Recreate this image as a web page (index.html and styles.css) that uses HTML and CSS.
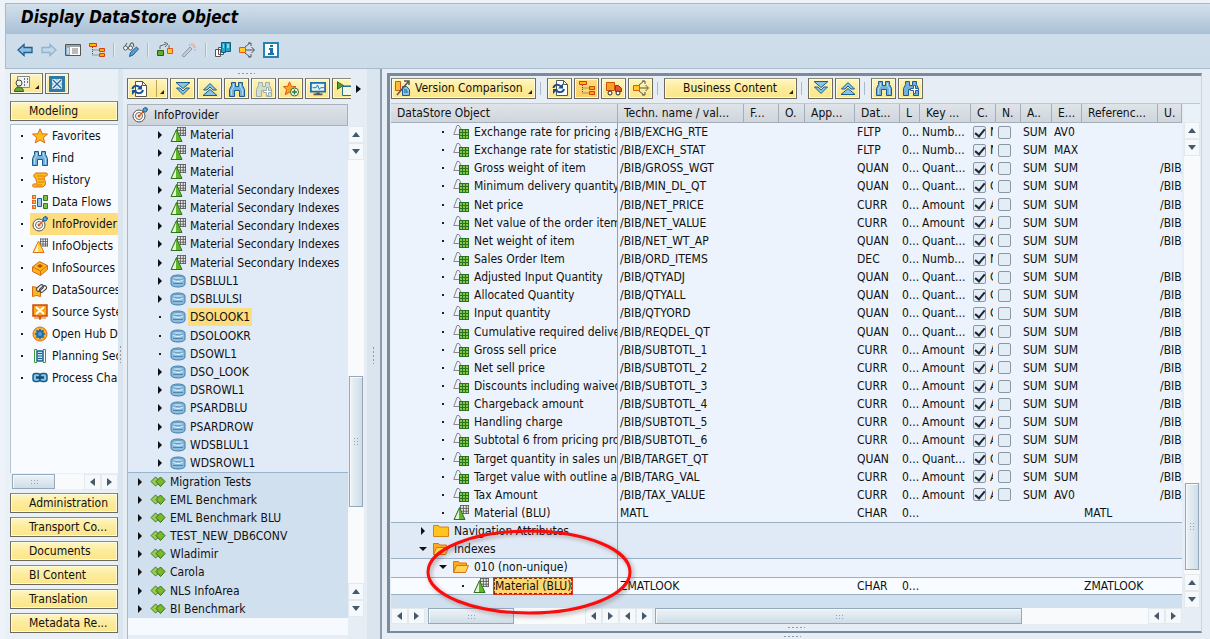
FILE: index.html
```
<!DOCTYPE html>
<html lang="en">
<head>
<meta charset="utf-8">
<title>Display DataStore Object</title>
<link rel="stylesheet" href="styles.css">
</head>
<body>
<svg class="sprite" aria-hidden="true">
  <symbol id="back" viewBox="0 0 16 16"><path d="M1 8l6-5.500v3h8v5H7v3z" fill="#8fc0e2" stroke="#1d5f93" stroke-width="1.300"/></symbol>
  <symbol id="fwd" viewBox="0 0 16 16"><path d="M15 8L9 2.500v3H1v5h8v3z" fill="#c3d9e9" stroke="#8fb4cf" stroke-width="1.300"/></symbol>
  <symbol id="layout" viewBox="0 0 16 16"><path d="M.5 2.500h15v11H.5z" fill="#fff" stroke="#555"/><path d="M1 5h4v8H1z" fill="#8eb4cc"/><path d="M1 3h14v2H1z" fill="#99a5ad"/><path d="M2 7h2M2 9h2M2 11h2" stroke="#fff"/><path d="M7 7h6M7 9h6M7 11h6" stroke="#777"/></symbol>
  <symbol id="hierarchy" viewBox="0 0 16 16"><path d="M3.500 5v8H10M3.500 8H10" fill="none" stroke="#555" stroke-dasharray="1 1"/><path d="M.5 1.500h7v3h-7z" fill="#fb0" stroke="#d2400f"/><path d="M10.500 6.500h5v3h-5zM10.500 11.500h5v3h-5z" fill="#fa0" stroke="#d2400f"/></symbol>
  <symbol id="glasses" viewBox="0 0 16 16"><path d="M1 6l3-5M6 5l2-4h2l1 4" fill="none" stroke="#555"/><circle cx="2.500" cy="6" r="2" fill="#fff" stroke="#555"/><circle cx="7.500" cy="6" r="2" fill="#fff" stroke="#555"/><path d="M6.500 14.500l1-4 6-5.500 2 2-5.500 6z" fill="#5aa0d0" stroke="#1d5f93"/></symbol>
  <symbol id="exchange" viewBox="0 0 16 16"><path d="M3 7V4l6-2M7 0l4 2-3 3M12 3v3" fill="none" stroke="#666"/><path d="M.5 8.500h6v5h-6z" fill="#5fae2e" stroke="#2c5c17"/><path d="M10.500 6.500h5v5h-5z" fill="#fc2" stroke="#e5541a"/></symbol>
  <symbol id="wand" viewBox="0 0 16 16"><path d="M1 13.500L9 5l2 2-8 8z" fill="#c5d0da" stroke="#8c98a3"/><path d="M11 1v3M15 5h-3M14 2l-2 2M8 2l1 2M15 9l-2-2" stroke="#ef9c77"/></symbol>
  <symbol id="copydocs" viewBox="0 0 16 16"><path d="M.5 7.500h5v7h-5zM3.500 5.500h5v7h-5z" fill="#fff" stroke="#555"/><path d="M6.500.5h4v10h-4zM10.500.5h5v9h-5z" fill="#23a6c8" stroke="#0b607c"/><path d="M12 3h2M12 5h2M8 3h1M8 5h1" stroke="#fff"/><path d="M5 8h2M5 10h2" stroke="#666"/></symbol>
  <symbol id="spread" viewBox="0 0 16 16"><path d="M6 5l5-4M9 1h3v3M6 11l5 4M9 15h3v-3M6 8h9M12.500 5l3 3-3 3" fill="none" stroke="#555"/><path d="M.5 5.500h6v5h-6z" fill="#fc2" stroke="#e5541a"/></symbol>
  <symbol id="info" viewBox="0 0 16 16"><path d="M1 1h14v14H1z" fill="#fff" stroke="#2683b4" stroke-width="2"/><path d="M7 3h3v2H7zM6 6h4v5h1v2H5v-2h2V8H6z" fill="#1b72a8"/></symbol>
  <symbol id="person" viewBox="0 0 16 16"><path d="M3.500.5h12v11h-12z" fill="#eef2f4" stroke="#888"/><path d="M10 3h1M13 3h1M10 6h1M13 6h1M10 9h1" stroke="#444" stroke-width="1.500"/><circle cx="5" cy="7" r="3" fill="#f6f6e8" stroke="#444"/><path d="M.5 15.500c0-6 9-6 9 0z" fill="#69a63a" stroke="#335f1a"/></symbol>
  <symbol id="close" viewBox="0 0 16 16"><path d="M1.500 1.500h13v13h-13z" fill="#9ccbe6" stroke="#2d7aa9" stroke-width="3"/><path d="M4 4l8 8M12 4l-8 8" stroke="#fff" stroke-width="3.500"/><path d="M4 4l8 8M12 4l-8 8" stroke="#2a6b9a" stroke-width="1.500"/></symbol>
  <symbol id="refresh" viewBox="0 0 16 16"><path d="M4.500.5h7l4 4v11h-11z" fill="#fff" stroke="#555"/><path d="M11.500.5v4h4" fill="none" stroke="#555"/><path d="M1.500 8C2 4 7 4 9.500 7M12 9c-1 4-6 4-8 1" fill="none" stroke="#1b4e8f" stroke-width="2"/><path d="M11 3.500v5H6zM1 14V9h5z" fill="#1b4e8f"/></symbol>
  <symbol id="down2" viewBox="0 0 16 16"><path d="M1 1.500h14l-7 6z" fill="#8cc3e4" stroke="#175f8f"/><path d="M1.500 7H5l3 3 3-3h3.500L8 13.500z" fill="#8cc3e4" stroke="#175f8f"/></symbol>
  <symbol id="up2" viewBox="0 0 16 16"><path d="M1 14.500h14l-7-6z" fill="#8cc3e4" stroke="#175f8f"/><path d="M1.500 9H5l3-3 3 3h3.500L8 2.500z" fill="#8cc3e4" stroke="#175f8f"/></symbol>
  <symbol id="find" viewBox="0 0 16 16"><path d="M2.500 1.500h4v4h3v-4h4v3l2 4v7h-5v-6h-5v6h-5v-7l2-4z" fill="#73b1db" stroke="#165c91"/><path d="M4.500 3v3l-2 3v5M11.500 3v3l2 3v5" fill="none" stroke="#b4daf2"/></symbol>
  <symbol id="findoff" viewBox="0 0 16 16"><path d="M2.500 1.500h4v4h3v-4h4v3l2 4v7h-5v-6h-5v6h-5v-7l2-4z" fill="#d3decb" stroke="#9aaeb0"/><path d="M10.500 6.500h2v3h3v2h-3v3h-2v-3h-3v-2h3z" fill="#fff" stroke="#9aaeb0"/></symbol>
  <symbol id="findnext" viewBox="0 0 16 16"><path d="M2.500 1.500h4v4h3v-4h4v3l2 4v7h-5v-6h-5v6h-5v-7l2-4z" fill="#73b1db" stroke="#165c91"/><path d="M10.500 5.500h2v3h3v2h-3v3h-2v-3h-3v-2h3z" fill="#fff" stroke="#2c5f9c"/></symbol>
  <symbol id="star" viewBox="0 0 16 16"><path d="M8 .8l2.100 5 5.400.3-4.200 3.500 1.500 5.300L8 12l-4.800 2.900 1.500-5.300L.5 6.100l5.400-.3z" fill="#fdbd1c" stroke="#dd6b12"/></symbol>
  <symbol id="staradd" viewBox="0 0 16 16"><path d="M6.500.8l1.800 4.500 4.700.3-3.600 3.200 1.300 5-4.200-2.600-4.300 2.600 1.400-5L.5 5.600l4.300-.3z" fill="#fba31c" stroke="#dd5b12"/><circle cx="11.500" cy="11" r="4" fill="#fff" stroke="#2e6b2e"/><path d="M11.500 8.500v5M9 11h5" stroke="#2e7a2e" stroke-width="1.500"/></symbol>
  <symbol id="monitor" viewBox="0 0 18 16"><path d="M1 1h16v10H1z" fill="#e2f2fa" stroke="#1d6fa5" stroke-width="2"/><path d="M3 6.500h4l1.500-3 2 5 1.500-2h4" fill="none" stroke="#1d6fa5"/><path d="M7 12h4v1h3v2H4v-2h3z" fill="#555"/></symbol>
  <symbol id="flag" viewBox="0 0 16 16"><path d="M1.500.5v8M7 5h9M6.500 13.500V5" fill="none" stroke="#555"/><path d="M1.500 1l6 3.500-6 3.500z" fill="#4fa52b" stroke="#2a6d17"/><path d="M6.500 5.500H18v9H6.500z" fill="#eef6e6" stroke="#2a6d8f"/></symbol>
  <symbol id="scroll" viewBox="0 0 16 16"><path d="M4 1h10c2 0 2 3 0 3h-1c-2 4 2 6 0 9-1 2-3 2-5 2H2c-2 0-2-3 0-3h2c2-2-1-4 0-6-3 0-3-4 0-5z" fill="#fdbd1c" stroke="#dd6b12"/><path d="M5 4h7M6 7h6M6 10h6M4 13h6" stroke="#e27a14"/></symbol>
  <symbol id="flows" viewBox="0 0 16 16"><path d="M0 1h4v4H0zM0 6h4v4H0zM0 11h4v4H0z" fill="#e46a1d"/><path d="M1.500 3h1.500M1.500 8h1.500M1.500 13h1.500" stroke="#ffe0a0" stroke-width="1.500"/><path d="M5.500 4.500h4v8h-4z" fill="#9cc9e6" stroke="#1d5f93"/><path d="M11.500 1.500h4v5h-4zM11.500 9.500h4v5h-4z" fill="#7fc04c" stroke="#2f7a24"/></symbol>
  <symbol id="target" viewBox="0 0 16 16"><circle cx="7" cy="9" r="6" fill="#fff" stroke="#555"/><circle cx="7" cy="9" r="3.500" fill="none" stroke="#666"/><circle cx="7" cy="9" r="1.500" fill="#df5d19"/><path d="M7 9l5-5" stroke="#df5d19" stroke-width="1.500"/><path d="M11 5V2l3-2v2h2l-2 3z" fill="#58a6d4" stroke="#17608f"/></symbol>
  <symbol id="grid" viewBox="0 0 8 8"><path d="M0 0h8v8H0z" fill="#f4f4f4"/><path d="M.5 0v8M3 0v8M5.500 0v8M7.500 0v8M0 .5h8M0 3h8M0 5.500h8M0 7.500h8" stroke="#555" stroke-width=".8"/></symbol>
  <symbol id="infoobj" viewBox="0 0 16 16"><use href="#grid" x="8" y="0" width="8" height="9"/><path d="M6.500 3L12 14.500H1z" fill="#ffd54a" stroke="#e5701c"/><path d="M6 6v8H2.500z" fill="#fff3c0"/></symbol>
  <symbol id="matl" viewBox="0 0 16 16"><use href="#grid" x="7" y="0" width="9" height="9"/><path d="M6.500 2.500L12 14.500H1z" fill="#5fb52d" stroke="#2f7518"/><path d="M6 5v9H2z" fill="#e6f4d8"/></symbol>
  <symbol id="source" viewBox="0 0 16 16"><path d="M.5 7l7-5.500 8 4v4l-7 6-8-4z" fill="#fdb51c" stroke="#d86a12"/><path d="M.5 7l8 4 7-5.500M8.500 11v4" fill="none" stroke="#d86a12"/><path d="M5 6l3-2 3 2-3 2z" fill="#b75010"/></symbol>
  <symbol id="dsource" viewBox="0 0 16 16"><path d="M.5 4.500l4 1h4v9l-4-1-4 1z" fill="#fdb51c" stroke="#d86a12"/><rect x="4" y="4" width="8" height="4" rx="2" fill="#eee" stroke="#444" transform="rotate(-40 8 6)"/><rect x="7" y="5" width="8" height="4" rx="2" fill="none" stroke="#444" transform="rotate(-40 11 7)"/></symbol>
  <symbol id="system" viewBox="0 0 16 16"><path d="M1 1h14v11H9l-1 3-1-3H1z" fill="#f9a61a" stroke="#c84d0e" stroke-width="1.500"/><path d="M4 3l8 7M12 3l-8 7" stroke="#fff" stroke-width="2"/><path d="M2 14h12" stroke="#d86a12"/></symbol>
  <symbol id="hub" viewBox="0 0 16 16"><circle cx="8" cy="8" r="7" fill="#fcb32b" stroke="#d86a12"/><path d="M8 2.500l1.500 2 2.500-.5-.5 2.500 2 1.500-2 1.500.5 2.500-2.500-.5-1.500 2-1.500-2-2.500.5.5-2.500-2-1.500 2-1.500L4 4l2.500.5z" fill="#1f6ca8"/><circle cx="8" cy="8" r="2" fill="#4aa0d8"/></symbol>
  <symbol id="plan" viewBox="0 0 16 16"><path d="M5 1.500H2.500v13H5M11 1.500h2.500v13H11" fill="none" stroke="#3f9a3c"/><path d="M5 3h6v10H5z" fill="#c3e0f0" stroke="#195f8f" stroke-width="1.500"/><path d="M6 5.500h4M6 8h4M6 10.500h4" stroke="#195f8f"/></symbol>
  <symbol id="chain" viewBox="0 0 16 16"><rect x="1" y="3.500" width="7" height="8" rx="2.500" fill="#8cc3e4" stroke="#175f8f" stroke-width="1.500"/><rect x="8" y="3.500" width="7" height="8" rx="2.500" fill="#8cc3e4" stroke="#175f8f" stroke-width="1.500"/><path d="M4 7.500h8" stroke="#0f4a72" stroke-width="2.500"/></symbol>
  <symbol id="cyl" viewBox="0 0 16 16"><path d="M1 5c0-4 14-4 14 0v6c0 4-14 4-14 0z" fill="#8cbbdd" stroke="#3f7dab"/><path d="M3 7c2 2 8 2 10 0" fill="none" stroke="#eaf5fc"/><ellipse cx="8" cy="5" rx="5.500" ry="1.500" fill="#b9daef" stroke="#3f80ab" stroke-width=".6"/><path d="M3 10.500h10" stroke="#4a86b0"/></symbol>
  <symbol id="area" viewBox="0 0 16 16"><path d="M5.500 3L1 7.500 5.500 12l5-4.500z" fill="#9ccb54" stroke="#3d7c20"/><path d="M10.500 3L6 7.500l4.500 5 4.500-5z" fill="#7bb928" stroke="#2d6c1a"/></symbol>
  <symbol id="keyfig" viewBox="0 0 16 16"><path d="M6 10.500H.8L4 1.500h2L8 5" fill="none" stroke="#888"/><path d="M6 5h10v10H6z" fill="#8dc63f"/><path d="M6.500 5v10M9.500 5v10M12.500 5v10M15.500 5v10M6 5.500h10M6 8.500h10M6 11.500h10M6 14.500h10" stroke="#267326"/></symbol>
  <symbol id="folder" viewBox="0 0 16 16"><path d="M.5 13.500v-11h5l1 1.500h9v9.500z" fill="#ffc51c" stroke="#d88412"/></symbol>
  <symbol id="folderopen" viewBox="0 0 16 16"><path d="M.5 13.500v-11h5l1 1.500h7v3" fill="#ffab1c" stroke="#d87412"/><path d="M.5 13.500l3-7h12l-3 7z" fill="#ffd555" stroke="#d87412"/></symbol>
  <symbol id="truck" viewBox="0 0 16 16"><path d="M.5 2.500h8v8h-8z" fill="#f9a21b" stroke="#cf4f10"/><path d="M9.500 5.500h3l3 3v3h-6z" fill="#e3552a" stroke="#a12c10"/><circle cx="4" cy="13" r="2" fill="#fff" stroke="#222"/><circle cx="12" cy="13" r="2" fill="#fff" stroke="#222"/></symbol>
  <symbol id="version" viewBox="0 0 16 16"><path d="M.5 1.500h5v9h-5z" fill="#fcbc35" stroke="#d25a12"/><path d="M7.500 6.500h4l3 3v6h-7z" fill="#8cc3e4" stroke="#175f8f"/><path d="M9 10h3M9 12h4" stroke="#175f8f"/><path d="M9 1h5v4M2 15L13 2" fill="none" stroke="#555" stroke-width="1.500"/></symbol>
</svg>
<div class="app">
  <header class="titlebar"><h1>Display DataStore Object</h1></header>
  <nav class="toolbar" aria-label="Application toolbar" id="apptools"></nav>
  <main class="work">
    <aside class="side">
      <div class="row buttons">
        <button class="btn menu" aria-label="Role"><svg><use href="#person"/></svg><i class="corner"></i></button>
        <button class="btn" aria-label="Close"><svg><use href="#close"/></svg></button>
      </div>
      <button class="btn wide first">Modeling</button>
      <ul class="nav" id="navlist"></ul>
      <div class="hbar side-bar"><i class="thumb h"></i><span class="track"></span><button class="ar left" aria-label="Scroll left"></button><button class="ar right" aria-label="Scroll right"></button></div>
      <div class="stack">
        <button class="btn wide">Administration</button>
        <button class="btn wide">Transport Co...</button>
        <button class="btn wide">Documents</button>
        <button class="btn wide">BI Content</button>
        <button class="btn wide">Translation</button>
        <button class="btn wide">Metadata Re...</button>
      </div>
    </aside>
    <div class="split"><i class="grip v"></i></div>
    <section class="middle">
      <div class="griprow"><i class="grip"></i></div>
      <div class="row midtools" id="midtools"></div>
      <div class="treebox">
        <div class="treecol">
          <div class="treehead"><svg><use href="#target"/></svg>InfoProvider</div>
          <ul class="tree" id="providers"></ul>
          <div class="treefoot"></div>
        </div>
        <div class="vbar mid-bar"><button class="ar up" aria-label="Scroll up"></button><button class="ar down" aria-label="Scroll down"></button><span class="track a"></span><i class="thumb v"></i><span class="track b"></span><button class="ar up" aria-label="Scroll up"></button><button class="ar down" aria-label="Scroll down"></button><span class="vfoot"></span></div>
      </div>
    </section>
    <div class="split right"><i class="grip v"></i></div>
    <section class="detail">
      <div class="frame">
        <div class="row dettools" id="dettools"></div>
        <div class="gridbox">
          <div class="tablewrap">
            <table>
              <colgroup><col><col class="w126"><col class="w35"><col class="w26"><col class="w50"><col class="w45"><col class="w20"><col class="w51"><col class="w25"><col class="w25"><col class="w31"><col class="w30"><col class="w76"><col class="w24"></colgroup>
              <thead><tr><th>DataStore Object</th><th>Techn. name / val...</th><th>F...</th><th>O.</th><th>App...</th><th>Dat...</th><th>L</th><th>Key ...</th><th>C.</th><th>N.</th><th>A..</th><th>E...</th><th>Referenc...</th><th>U.</th></tr></thead>
              <tbody id="rows"></tbody>
            </table>
            <svg class="mark" viewBox="0 0 208 88" aria-hidden="true"><ellipse cx="104" cy="43" rx="101" ry="41"/></svg>
          </div>
          <div class="vbar"><span class="headgap"></span><button class="ar up" aria-label="Scroll up"></button><button class="ar down" aria-label="Scroll down"></button><span class="track a"></span><i class="thumb v"></i><span class="track c"></span><button class="ar up" aria-label="Scroll up"></button><button class="ar down" aria-label="Scroll down"></button></div>
        </div>
        <div class="hbar det-bar">
          <div class="hpart one"><button class="ar left" aria-label="Scroll left"></button><button class="ar right" aria-label="Scroll right"></button><i class="thumb h"></i><span class="track"></span><button class="ar left" aria-label="Scroll left"></button><button class="ar right" aria-label="Scroll right"></button></div>
          <div class="hpart two"><button class="ar left" aria-label="Scroll left"></button><button class="ar right" aria-label="Scroll right"></button><i class="thumb h"></i><span class="track"></span><button class="ar left" aria-label="Scroll left"></button><button class="ar right" aria-label="Scroll right"></button></div>
        </div>
        <div class="griprow"><i class="grip"></i></div>
      </div>
      <div class="griprow low"><i class="grip"></i></div>
    </section>
  </main>
</div>
<script src="app.js"></script>
</body>
</html>
```
FILE: styles.css
```
* { box-sizing: border-box; }
body { margin: 0; font: 12px/18px "DejaVu Sans Condensed", "DejaVu Sans", "Noto Sans", sans-serif; color: #111; background: #eef3fa; }
button { font: inherit; color: inherit; }
ul { list-style: none; margin: 0; padding: 0; }
svg { width: 16px; height: 16px; flex: none; }
.sprite { position: absolute; width: 0; height: 0; }
.app { height: 100vh; padding: 3px 0 0 5px; display: flex; flex-direction: column; overflow: hidden; }
.titlebar { height: 31px; flex: none; border: 1px solid #a9b9c9; border-width: 1px 0 0 1px; background: linear-gradient(#d3e0eb, #a9c0d6); padding: 0 15px; }
h1 { margin: 0; font: italic bold 17px/27px "DejaVu Sans Condensed", "DejaVu Sans", sans-serif; color: #000; }
.toolbar { height: 35px; flex: none; background: linear-gradient(#cfdeea, #cddce9); border: 1px solid #a9bccd; border-width: 0 0 1px 1px; display: flex; align-items: center; gap: 8px; padding: 0 0 3px 11px; }
.tool { border: 0; background: none; padding: 0; height: 16px; display: flex; }
.bar { width: 2px; height: 14px; flex: none; background: #a9bac8; border-right: 1px solid #e6eef4; }
.work { flex: 1; min-height: 0; display: flex; background: #e6edf5; }
.row { display: flex; align-items: center; }

.btn { height: 21px; flex: none; padding: 0 3px; border: 1px solid #6b6960; border-top-color: #8c8a78; background: linear-gradient(#fff6c2, #fdeb9a 50%, #fbe68a); box-shadow: inset 0 0 0 1px #fffbe0; display: flex; align-items: center; justify-content: center; position: relative; }
.btn.menu { padding-right: 12px; }
.corner { position: absolute; right: 3px; bottom: 4px; width: 0; height: 0; border: 0 solid transparent; border-left-width: 4px; border-bottom: 4px solid #222; }
.btn.on { background: linear-gradient(#ffdd82, #fbcf62); }
.wide { width: 100%; justify-content: flex-start; padding-left: 18px; white-space: nowrap; overflow: hidden; }

.side { width: 113px; flex: none; padding: 4px 0 0 5px; display: flex; flex-direction: column; background: #e9f0f6; }
.buttons { gap: 2px; margin-bottom: 7px; }
.nav { flex: 1; min-height: 0; margin-top: 3px; background: #f8fbff; border: 1px solid #b4c3d2; border-width: 1px 0 0 1px; overflow: hidden; }
.nav li { height: 22px; display: flex; align-items: center; white-space: nowrap; }
.nav a, .tree a { color: inherit; text-decoration: none; }
.nav a { display: flex; align-items: center; gap: 4px; flex: 1; height: 22px; padding-left: 2px; overflow: hidden; }
.nav .sel { background: #fddd7e; }
.dot { width: 2px; height: 2px; background: #222; flex: none; margin: 0 7px 0 10px; }
.stack { display: flex; flex-direction: column; gap: 4px; padding-bottom: 6px; }
.stack .btn { height: 20px; }
.first { height: 20px; }

.ar { width: 17px; height: 16px; flex: none; border: 1px solid #e2e9ef; background: #f6f9fc; padding: 0; display: grid; place-items: center; }
.ar::before { content: ""; border: 4px solid transparent; }
.ar.up::before { border-top: 0; border-bottom: 5px solid #45596b; }
.ar.down::before { border-bottom: 0; border-top: 5px solid #45596b; }
.ar.left::before { border-left: 0; border-right: 5px solid #45596b; }
.ar.right::before { border-right: 0; border-left: 5px solid #45596b; }
.hbar { display: flex; height: 16px; flex: none; }
.thumb { border: 1px solid #94a9bb; box-shadow: inset 1px 1px #f5f9fc; display: grid; place-items: center; flex: none; }
.thumb.h { background: linear-gradient(#edf3f7, #cfdde7); }
.thumb.v { background: linear-gradient(90deg, #edf3f7, #cfdde7); width: 14px; margin: 0 1px; }
.thumb::before { content: ""; width: 8px; height: 5px; background: radial-gradient(circle, #8fa3b3 1px, transparent 1px) 0 0 / 3px 3px; }
.thumb.v::before { width: 6px; height: 9px; }
.track { flex: 1; background: #f9fafb; }
.side-bar { margin: 1px 0 3px; padding: 0 0 1px 2px; }
.side-bar .thumb { width: 43px; }
.vbar { width: 16px; flex: none; display: flex; flex-direction: column; }
.vbar .ar { width: 16px; height: 17px; }

.grip { width: 18px; height: 3px; background: radial-gradient(circle, #8c9cab 1px, transparent 1px) 0 0 / 4px 3px; }
.grip.v { width: 3px; height: 18px; background-size: 3px 4px; }
.griprow { display: flex; justify-content: center; align-items: center; height: 9px; flex: none; }
.split { width: 5px; flex: none; background: #dbe5ed; display: grid; place-items: center; }
.split.right { width: 13px; padding-top: 2px; }
.middle { width: 244px; flex: none; padding: 0 3px 0 4px; display: flex; flex-direction: column; overflow: hidden; }
.midtools { height: 26px; gap: 2px; padding-bottom: 5px; }
.midtools .btn { width: 25px; overflow: hidden; }
.midtools .menu { width: 41px; justify-content: flex-start; }
.midtools .menu::after { content: ""; position: absolute; left: 28px; top: 1px; bottom: 1px; border-left: 1px solid #b7a55e; }
.midtools .cut { width: 19px; justify-content: flex-start; border-right: 0; }
.midtools .more { border: 0; background: none; padding: 0; margin-left: 3px; }
.more::before { content: ""; display: block; border: 4px solid transparent; border-right: 0; border-left: 5px solid #111; }
.treebox { flex: 1; min-height: 0; display: flex; }
.treecol { flex: 1; display: flex; flex-direction: column; border-left: 1px solid #a9b9c8; }
.treehead { height: 22px; flex: none; display: flex; align-items: center; gap: 6px; padding-left: 4px; background: linear-gradient(#dde3e9, #cdd3da); border: 1px solid #a7b1bc; border-left: 0; }
.tree { flex: 1; min-height: 0; display: grid; grid-auto-rows: minmax(0, 1fr); background: #e1ebf8; }
.tree li { display: flex; align-items: center; gap: 8px; padding-left: 30px; white-space: nowrap; }
.tree .top { background: #d1e0ef; padding-left: 10px; }
.tree .edge { border-top: 1px solid #98b3cd; }
.tree a { padding: 0 2px; margin-left: -6px; }
.tree .sel a { background: #fddd7e; }
.tw { width: 4px; height: 8px; flex: none; border: 4px solid transparent; border-right: 0; border-left-color: #111; }
.tw.leaf { width: 2px; height: 2px; border: 0; background: #222; margin: 0 1px; }
.treefoot { height: 21px; flex: none; background: #f6fafe; border-bottom: 4px solid #e6edf5; }
.mid-bar { padding-top: 22px; }
.mid-bar .thumb { height: 131px; }
.mid-bar .track.b { flex: 0 0 76px; }
.mid-bar .vfoot { height: 22px; flex: none; }

.detail { flex: 1; min-width: 0; padding: 4px 8px 0 0; border-left: 2px solid #8a9bab; background: #e6edf5; display: flex; flex-direction: column; }
.frame { flex: 1; min-height: 0; margin-left: 5px; border: 3px solid #788c9d; border-width: 3px 1px 2px 3px; border-right-color: #c8d4de; padding: 0 1px; display: flex; flex-direction: column; }
.dettools { height: 27px; gap: 2px; padding-bottom: 3px; }
.dettools .btn { width: 25px; }
.dettools .version { width: 145px; gap: 4px; padding: 0 3px; justify-content: flex-start; white-space: nowrap; }
.dettools .content { width: 133px; padding-left: 18px; justify-content: flex-start; white-space: nowrap; }
.dettools .bar { height: 13px; margin: 0 3px 0 2px; }
.gridbox { flex: 1; min-height: 0; display: flex; gap: 2px; border-top: 1px solid #bccad6; }
.tablewrap { flex: 1; min-width: 0; position: relative; background: #d1e0ef; padding-bottom: 13px; }
table { width: 100%; height: 100%; table-layout: fixed; border-collapse: separate; border-spacing: 0; }
.w126 { width: 126px; } .w35 { width: 35px; } .w26 { width: 26px; } .w50 { width: 50px; } .w45 { width: 45px; } .w20 { width: 20px; } .w51 { width: 51px; } .w25 { width: 25px; } .w31 { width: 31px; } .w30 { width: 30px; } .w76 { width: 76px; } .w24 { width: 24px; }
th, td { padding: 0; font-weight: normal; text-align: left; white-space: nowrap; overflow: hidden; line-height: 16px; }
th { height: 19px; padding-left: 6px; background: linear-gradient(#dfe4e9, #cfd5db); border-right: 1px solid #a4afba; border-bottom: 1px solid #a4afba; }
td { background: #ecf3fc; padding-left: 2px; height: 18px; }
td:first-child { border-right: 1px solid #8fa0b2; }
.group td { background: #e0eaf7; }
.line td { box-shadow: inset 0 1px #9cb0c4; }
.current td { background: #f8fbff; box-shadow: inset 0 1px #9cb0c4, inset 0 -1px #9cb0c4; }
.cell { display: flex; align-items: center; gap: 8px; height: 16px; }
.cell span { margin-left: -3px; }
.cell .open { width: 8px; height: 4px; border: 4px solid transparent; border-bottom: 0; border-top-color: #111; margin: 0 -2px; }
.d1 { padding-left: 28px; } .d2 { padding-left: 48px; } .d3 { padding-left: 68px; }
.pick { background: #fbd671; border: 1px dashed #7a3a10; outline: 1px solid #e2351f; line-height: 14px; }
.checks { display: flex; align-items: center; gap: 4px; width: 20px; overflow: hidden; }
td input { appearance: none; width: 13px; height: 13px; margin: 0; flex: none; border: 1px solid #8b98a4; border-radius: 2px; background: #e3edf5; display: grid; place-items: center; vertical-align: middle; }
td input:checked::before { content: ""; width: 4px; height: 8px; margin-bottom: 2px; border: solid #1d2433; border-width: 0 2px 2px 0; transform: rotate(40deg); }
.mark { position: absolute; left: 34px; bottom: -9px; width: 208px; height: 88px; pointer-events: none; filter: drop-shadow(2px 2px 2px rgba(80, 40, 40, .4)); }
.mark ellipse { fill: none; stroke: #fb0d0d; stroke-width: 3; }
.headgap { height: 18px; flex: none; background: #e9f1f9; }
.gridbox .thumb { height: 87px; }
.gridbox .track.c { flex: 0 0 4px; }
.det-bar { padding-right: 18px; }
.hpart { display: flex; }
.hpart.one { width: 228px; flex: none; }
.hpart.one .thumb { width: 86px; margin-left: 3px; }
.hpart.two { flex: 1; }
.hpart.two .thumb { width: 367px; margin-left: 2px; }
.frame > .griprow { height: 7px; }
.low { height: 6px; }
```
FILE: app.js
```
const icon = (id) => `<svg aria-hidden="true"><use href="#${id}"/></svg>`;
const put = (id, html) => { document.getElementById(id).innerHTML = html; };
const button = ([id, label, cls = '', text = '']) =>
  id === '|' ? '<i class="bar"></i>' :
  `<button class="btn ${cls}" aria-label="${label}">${id ? icon(id) : ''}${text}${/menu/.test(cls) ? '<i class="corner"></i>' : ''}</button>`;

put('apptools', [['back', 'Back'], ['fwd', 'Forward'], ['layout', 'Layout'], ['hierarchy', 'Tree'], ['|'], ['glasses', 'Display/Change'], ['|'], ['exchange', 'Exchange'], ['wand', 'Activate'], ['|'], ['copydocs', 'Versions'], ['spread', 'Where-used'], ['info', 'Information']]
  .map(([id, label]) => id === '|' ? '<i class="bar"></i>' : `<button class="tool" aria-label="${label}">${icon(id)}</button>`).join(''));

put('midtools', [['refresh', 'Refresh', 'menu'], ['down2', 'Expand'], ['up2', 'Collapse'], ['find', 'Find'], ['findoff', 'Find next'], ['staradd', 'Add favorite'], ['monitor', 'Monitor'], ['flag', 'Hierarchy', 'cut']]
  .map(button).join('') + '<button class="more" aria-label="More"></button>');

put('dettools', [['version', 'Version Comparison', 'version menu', 'Version Comparison'], ['|'], ['refresh', 'Refresh'], ['hierarchy', 'Tree', 'on'], ['truck', 'Transport'], ['spread', 'Where-used'], ['|'], ['', 'Business Content', 'content menu', 'Business Content'], ['|'], ['down2', 'Expand'], ['up2', 'Collapse'], ['|'], ['find', 'Find'], ['findnext', 'Find next']]
  .map(button).join(''));

put('navlist', [['star', 'Favorites'], ['find', 'Find'], ['scroll', 'History'], ['flows', 'Data Flows'], ['target', 'InfoProvider'], ['infoobj', 'InfoObjects'], ['source', 'InfoSources'], ['dsource', 'DataSources'], ['system', 'Source Systems'], ['hub', 'Open Hub Destination'], ['plan', 'Planning Sequences'], ['chain', 'Process Chains']]
  .map(([id, text]) => `<li><i class="dot"></i><a href="#" class="${id === 'target' ? 'sel' : ''}">${icon(id)}${text}</a></li>`).join(''));

const nodes = [
  ...Array(3).fill(['matl', 'Material']),
  ...Array(5).fill(['matl', 'Material Secondary Indexes']),
  ...['DSBLUL1', 'DSBLULSI', 'DSOLOOK1', 'DSOLOOKR', 'DSOWL1', 'DSO_LOOK', 'DSROWL1', 'PSARDBLU', 'PSARDROW', 'WDSBLUL1', 'WDSROWL1'].map((t) => ['cyl', t]),
  ...['Migration Tests', 'EML Benchmark', 'EML Benchmark BLU', 'TEST_NEW_DB6CONV', 'Wladimir', 'Carola', 'NLS InfoArea', 'BI Benchmark'].map((t) => ['area', t]),
];
const leaves = ['DSOLOOK1', 'DSOLOOKR', 'DSOWL1'];
put('providers', nodes.map(([id, text]) => {
  const cls = [id === 'area' && 'top', text === 'Migration Tests' && 'edge', text === 'DSOLOOK1' && 'sel'].filter(Boolean).join(' ');
  return `<li class="${cls}"><i class="tw ${leaves.includes(text) ? 'leaf' : ''}"></i>${icon(id)}<a href="#">${text}</a></li>`;
}).join(''));

const fields = [
  ['Exchange rate for pricing and statistics', 'EXCHG_RTE', 'FLTP', 'Numb...', 'AV0', ''],
  ['Exchange rate for statistics', 'EXCH_STAT', 'FLTP', 'Numb...', 'MAX', ''],
  ['Gross weight of item', 'GROSS_WGT', 'QUAN'],
  ['Minimum delivery quantity', 'MIN_DL_QT', 'QUAN'],
  ['Net price', 'NET_PRICE', 'CURR'],
  ['Net value of the order item', 'NET_VALUE', 'CURR'],
  ['Net weight of item', 'NET_WT_AP', 'QUAN'],
  ['Sales Order Item', 'ORD_ITEMS', 'DEC', 'Numb...', 'SUM', ''],
  ['Adjusted Input Quantity', 'QTYADJ', 'QUAN'],
  ['Allocated Quantity', 'QTYALL', 'QUAN'],
  ['Input quantity', 'QTYORD', 'QUAN'],
  ['Cumulative required delivery', 'REQDEL_QT', 'QUAN'],
  ['Gross sell price', 'SUBTOTL_1', 'CURR'],
  ['Net sell price', 'SUBTOTL_2', 'CURR'],
  ['Discounts including waived', 'SUBTOTL_3', 'CURR'],
  ['Chargeback amount', 'SUBTOTL_4', 'CURR'],
  ['Handling charge', 'SUBTOTL_5', 'CURR'],
  ['Subtotal 6 from pricing procedure', 'SUBTOTL_6', 'CURR'],
  ['Target quantity in sales units', 'TARGET_QT', 'QUAN'],
  ['Target value with outline agreement', 'TARG_VAL', 'CURR'],
  ['Tax Amount', 'TAX_VALUE', 'CURR', 'Amount', 'AV0'],
];
const tr = (cls, depth, twist, id, name, cells) =>
  `<tr class="${cls}"><td><div class="cell ${depth}"><i class="tw ${twist}"></i>${icon(id)}<span class="${cls.includes('current') ? 'pick' : ''}">${name}</span></div></td>${cells.map((c) => `<td>${c}</td>`).join('')}</tr>`;
const blank = Array(13).fill('');
const material = (tech) => [tech, '', '', '', 'CHAR', '0...', '', '', '', '', '', tech, ''];

put('rows', fields.map(([name, tech, type, key = type === 'QUAN' ? 'Quant...' : 'Amount', ex = 'SUM', unit = '/BIB/']) =>
  tr('', 'd2', 'leaf', 'keyfig', name, [`/BIB/${tech}`, '', '', '', type, '0...', key,
    `<label class="checks"><input type="checkbox" checked>${key[0]}</label>`, `<input type="checkbox" aria-label="Navigation ${tech}">`, 'SUM', ex, '', unit])).join('')
  + tr('', 'd2', 'leaf', 'matl', 'Material (BLU)', material('MATL'))
  + tr('group line', 'd1', '', 'folder', 'Navigation Attributes', blank)
  + tr('group', 'd1', 'open', 'folderopen', 'Indexes', blank)
  + tr('line', 'd2', 'open', 'folderopen', '010 (non-unique)', blank)
  + tr('line current', 'd3', 'leaf', 'matl', 'Material (BLU)', material('ZMATLOOK')));
```
